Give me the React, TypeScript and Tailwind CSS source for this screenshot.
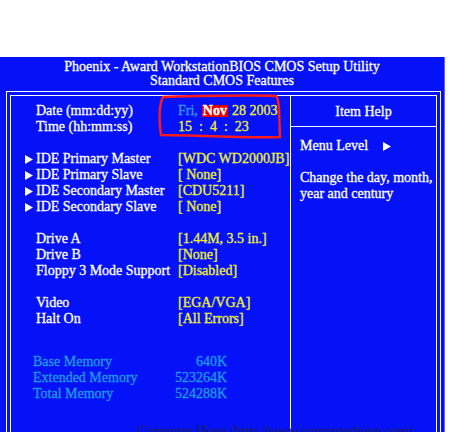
const font = { fontFamily: '"Liberation Serif", "Times New Roman", serif' };

function Tri({ className = '' }: { className?: string }) {
  return (
    <svg viewBox="0 0 8 9" className={className} fill="#ffffff">
      <path d="M0 0 L8 4.5 L0 9 Z" />
    </svg>
  );
}

const ide = [
  ['IDE Primary Master', '[WDC WD2000JB]'],
  ['IDE Primary Slave', '[ None]'],
  ['IDE Secondary Master', '[CDU5211]'],
  ['IDE Secondary Slave', '[ None]'],
];

const drives = [
  ['Drive A', '[1.44M, 3.5 in.]'],
  ['Drive B', '[None]'],
  ['Floppy 3 Mode Support', '[Disabled]'],
];

const misc = [
  ['Video', '[EGA/VGA]'],
  ['Halt On', '[All Errors]'],
];

const memory = [
  ['Base Memory', '640K'],
  ['Extended Memory', '523264K'],
  ['Total Memory', '524288K'],
];

function Row({ label, value, arrow }: { label: string; value: string; arrow?: boolean }) {
  return (
    <div className="flex h-4 items-center">
      <div className="flex w-[25px] justify-end pr-[3px]">
        {arrow && <Tri className="h-[9px] w-[8px]" />}
      </div>
      <div className="w-[142px] text-white">{label}</div>
      <div className="text-[#f2f22a]">{value}</div>
    </div>
  );
}

export default function App() {
  return (
    <div className="h-[432px] w-[469px] overflow-hidden bg-white text-[14px] leading-4" style={font}>
      <div className="h-[57px]" />
      <div className="relative w-[445px] border-r border-[#5a66ff] bg-[#0512f8] pt-[3px] [-webkit-text-stroke:0.3px_currentColor]">
        <div className="text-center text-white">
          <div className="h-[14px] leading-[14px]">Phoenix - Award WorkstationBIOS CMOS Setup Utility</div>
          <div className="h-[14px] leading-[14px]">Standard CMOS Features</div>
        </div>

        <div className="ml-[6px] mr-[3px] mt-[3px] border border-white p-[3px]">
          <div className="flex h-[360px] border border-white">
            {/* left: settings */}
            <div className="w-[279px] pt-[7px]">
              <div className="flex h-4 items-center">
                <div className="w-[167px] pl-[25px] text-white">Date (mm:dd:yy)</div>
                <div className="flex items-center">
                  <span className="text-[#3b9cf2]">Fri,</span>
                  <span className="ml-[4px] bg-[#e60000] px-[1px] font-bold leading-[12px] text-white">Nov</span>
                  <span className="ml-[4px] text-[#f2f22a]">28 2003</span>
                </div>
              </div>
              <div className="flex h-4 items-center">
                <div className="w-[167px] pl-[25px] text-white">Time (hh:mm:ss)</div>
                <div className="whitespace-pre text-[#f2f22a]">15  :  4  :  23</div>
              </div>

              <div className="mt-4">
                {ide.map(([l, v]) => (
                  <Row key={l} label={l} value={v} arrow />
                ))}
              </div>
              <div className="mt-4">
                {drives.map(([l, v]) => (
                  <Row key={l} label={l} value={v} />
                ))}
              </div>
              <div className="mt-4">
                {misc.map(([l, v]) => (
                  <Row key={l} label={l} value={v} />
                ))}
              </div>

              <div className="mt-[27px] pl-[22px] text-[#1e9ae8]">
                {memory.map(([l, v]) => (
                  <div key={l} className="flex h-4 items-center">
                    <div className="w-[110px]">{l}</div>
                    <div className="w-[84px] text-right">{v}</div>
                  </div>
                ))}
              </div>
            </div>

            {/* right: item help */}
            <div className="flex-1 border-l border-white">
              <div className="flex h-[31px] items-center justify-center border-b border-white pt-[1px] text-white">Item Help</div>
              <div className="pl-[9px] pt-[11px] text-white">
                <div className="flex h-4 items-center">
                  <span>Menu Level</span>
                  <Tri className="ml-[15px] h-[9px] w-[8px]" />
                </div>
                <div className="mt-4">Change the day, month,</div>
                <div>year and century</div>
              </div>
            </div>
          </div>
        </div>

        {/* annotation around date/time */}
        <svg className="pointer-events-none absolute left-0 top-0" width="445" height="100" viewBox="0 57 445 100">
          <path
            d="M163 97 C200 96 250 95 276 96 C280 99 279 120 280 137 C240 138 190 135 161 135 C159 120 159 105 163 97 Z"
            fill="none"
            stroke="#ff1a1a"
            strokeWidth="2.5"
          />
        </svg>

        <div className="absolute left-[137px] top-[367px] whitespace-nowrap text-[#1b1f6a]">
          Computer Hope (http://www.computerhope.com)
        </div>
      </div>
    </div>
  );
}
